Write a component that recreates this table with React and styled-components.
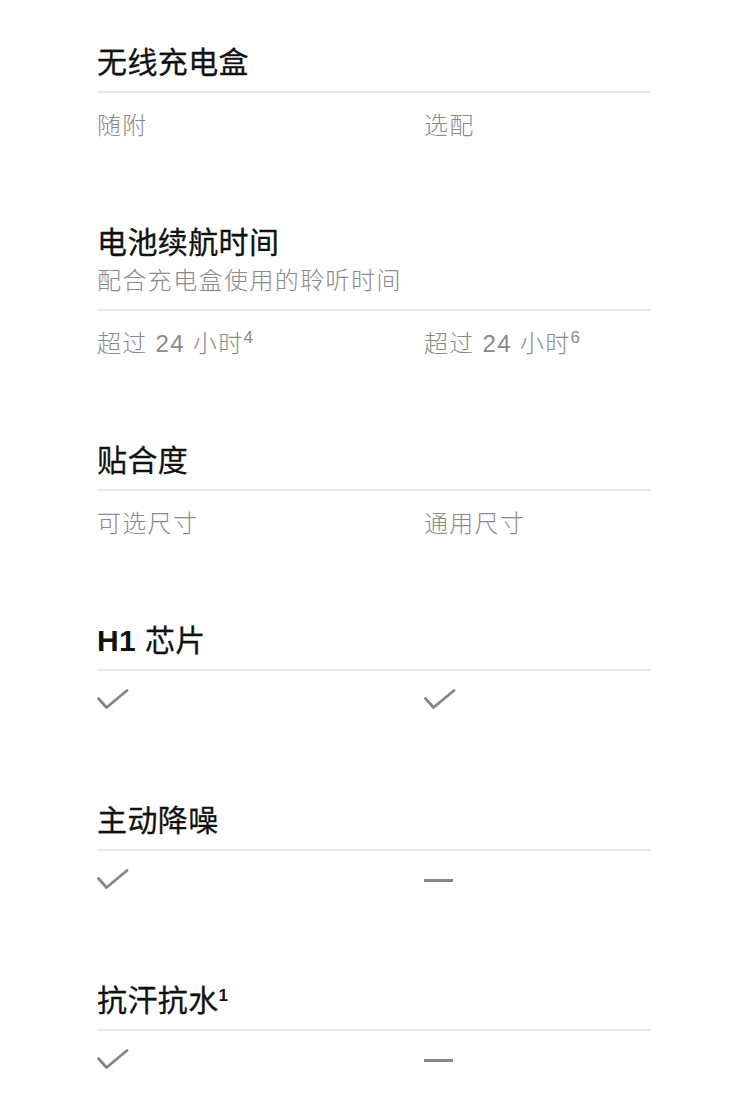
import styled, { createGlobalStyle } from "styled-components";

const GlobalStyle = createGlobalStyle`
  html, body {
    margin: 0;
    padding: 0;
    background: #fff;
  }
  body {
    font-family: "Liberation Sans", "Noto Sans CJK SC", sans-serif;
    -webkit-font-smoothing: antialiased;
  }
`;

const Page = styled.div`
  width: 554px;
  padding: 44px 0 40px 97px;
  display: flex;
  flex-direction: column;
  gap: 81px;
`;

const Section = styled.section`
  display: flex;
  flex-direction: column;
`;

const Header = styled.div`
  padding-bottom: 9px;
  border-bottom: 2px solid #e8e8e8;
`;

const Title = styled.h3`
  margin: 0;
  font-size: 30px;
  line-height: 38px;
  font-weight: 400;
  color: #111;
  letter-spacing: 0.4px;
  -webkit-text-stroke: 0.3px #111;

  strong {
    font-weight: 700;
    -webkit-text-stroke: 0;
  }

  sup {
    font-size: 17px;
    font-weight: 700;
    vertical-align: top;
    line-height: 28px;
    -webkit-text-stroke: 0;
  }
`;

const Subtitle = styled.p`
  margin: 0;
  font-size: 24px;
  line-height: 38px;
  font-weight: 300;
  color: #8a8a8a;
  letter-spacing: 1.4px;
`;

const Row = styled.div`
  display: grid;
  grid-template-columns: 327px 1fr;
  margin-top: 16px;
`;

const Value = styled.div`
  height: 34px;
  font-size: 24px;
  line-height: 34px;
  font-weight: 300;
  color: #8a8a8a;
  letter-spacing: 1.3px;

  sup {
    font-size: 17px;
    vertical-align: top;
    line-height: 22px;
    letter-spacing: 0;
  }
`;

const MarkCell = styled.div`
  height: 34px;
  display: flex;
  align-items: flex-start;
  padding-top: ${(p) => (p.$dash ? 12 : 2)}px;
  box-sizing: border-box;
`;

const Dash = styled.span`
  display: block;
  width: 29px;
  height: 3px;
  background: #868686;
`;

function Check() {
  return (
    <svg width="32" height="21" viewBox="0 0 32 21" fill="none">
      <path
        d="M1.5 9.5 L9.5 18.5 L30 1.5"
        stroke="#868686"
        strokeWidth="2.8"
        strokeLinecap="round"
        strokeLinejoin="round"
      />
    </svg>
  );
}

function Cell({ v }) {
  if (v === "check") {
    return (
      <MarkCell>
        <Check />
      </MarkCell>
    );
  }
  if (v === "dash") {
    return (
      <MarkCell $dash>
        <Dash />
      </MarkCell>
    );
  }
  return <Value>{v}</Value>;
}

const rows = [
  { title: "无线充电盒", values: ["随附", "选配"] },
  {
    title: "电池续航时间",
    sub: "配合充电盒使用的聆听时间",
    values: [
      <>
        超过 24 小时<sup>4</sup>
      </>,
      <>
        超过 24 小时<sup>6</sup>
      </>,
    ],
  },
  { title: "贴合度", values: ["可选尺寸", "通用尺寸"] },
  {
    title: (
      <>
        <strong>H1</strong> 芯片
      </>
    ),
    values: ["check", "check"],
  },
  { title: "主动降噪", values: ["check", "dash"] },
  {
    title: (
      <>
        抗汗抗水<sup>1</sup>
      </>
    ),
    values: ["check", "dash"],
  },
];

export default function App() {
  return (
    <>
      <GlobalStyle />
      <Page>
        {rows.map((r, i) => (
          <Section key={i}>
            <Header>
              <Title>{r.title}</Title>
              {r.sub && <Subtitle>{r.sub}</Subtitle>}
            </Header>
            <Row>
              {r.values.map((v, j) => (
                <Cell key={j} v={v} />
              ))}
            </Row>
          </Section>
        ))}
      </Page>
    </>
  );
}
